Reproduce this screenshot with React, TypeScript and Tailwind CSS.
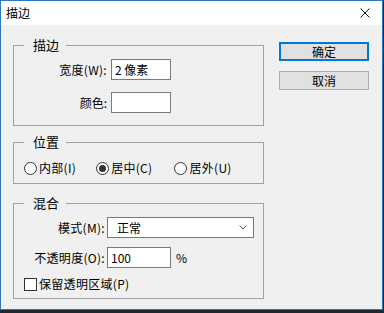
import React from "react";

const font = { fontFamily: '"Noto Sans CJK SC", "Noto Sans", sans-serif' };

function Radio({ label, checked }: { label: string; checked?: boolean }) {
  return (
    <div className="flex items-center gap-[2px]">
      <div className="w-[13px] h-[13px] rounded-full border border-[#333333] bg-white flex items-center justify-center">
        {checked && <div className="w-[7px] h-[7px] rounded-full bg-[#333333]" />}
      </div>
      <span className="text-[12px] leading-[16px] text-black tracking-[0.3px]">{label}</span>
    </div>
  );
}

function Group({ title, children, className }: { title: string; children: React.ReactNode; className?: string }) {
  return (
    <fieldset className={"border border-[#a0a0a0] w-[251px] " + (className ?? "")}>
      <legend className="ml-[10px] pl-[9px] pr-[7px] text-[13px] leading-[16px] text-black">{title}</legend>
      {children}
    </fieldset>
  );
}

export default function App() {
  return (
    <div className="w-[384px] h-[313px] bg-[#1d2a36] overflow-hidden" style={font}>
      <div className="w-[383px] h-[310px] border border-[#2b78c0] bg-[#f0f0f0] flex flex-col">
        <div className="h-[24px] bg-white flex items-center justify-between pl-[5px] pr-[12px] shrink-0">
          <span className="text-[12px] leading-[16px] text-black">描边</span>
          <svg width="10" height="10" viewBox="0 0 10 10">
            <path d="M0.5 0.5 L9.5 9.5 M9.5 0.5 L0.5 9.5" stroke="#111" strokeWidth="1" />
          </svg>
        </div>
        <div className="flex flex-1">
          <div className="pl-[12px] flex flex-col">
            <Group title="描边" className="mt-[12px]">
              <div className="grid grid-cols-[93px_60px] gap-x-[4px] gap-y-[12px] items-center pt-[6px] pb-[12px]">
                <span className="text-right text-[12px] leading-[16px] tracking-[0.3px]">宽度(W):</span>
                <div className="h-[21px] border border-[#7a7a7a] bg-white pl-[3px] text-[12px] leading-[19px]">2 像素</div>
                <span className="text-right text-[12px] leading-[16px]">颜色:</span>
                <div className="h-[21px] border border-[#7a7a7a] bg-white" />
              </div>
            </Group>
            <Group title="位置" className="mt-[8px]">
              <div className="flex items-center gap-[20px] pl-[10px] pt-[10px] pb-[7px]">
                <Radio label="内部(I)" />
                <Radio label="居中(C)" checked />
                <div className="ml-[2px]">
                  <Radio label="居外(U)" />
                </div>
              </div>
            </Group>
            <Group title="混合" className="mt-[11px]">
              <div className="flex flex-col pt-[6px] pb-[6px]">
                <div className="flex items-center">
                  <span className="w-[91px] text-right text-[12px] leading-[16px] tracking-[0.3px]">模式(M):</span>
                  <div className="ml-[2px] w-[147px] h-[21px] border border-[#7a7a7a] bg-white flex items-center justify-between pl-[9px] pr-[6px]">
                    <span className="text-[12px] leading-[16px]">正常</span>
                    <svg width="8" height="5" viewBox="0 0 8 5">
                      <path d="M0.5 0.5 L4 4 L7.5 0.5" stroke="#555" strokeWidth="1" fill="none" />
                    </svg>
                  </div>
                </div>
                <div className="flex items-center mt-[9px]">
                  <span className="w-[91px] text-right text-[12px] leading-[16px] tracking-[0.3px]">不透明度(O):</span>
                  <div className="ml-[2px] w-[64px] h-[21px] border border-[#7a7a7a] bg-white pl-[3px] text-[12px] leading-[19px]">100</div>
                  <span className="ml-[5px] text-[12px] leading-[16px]">%</span>
                </div>
                <div className="flex items-center gap-[2px] pl-[10px] mt-[8px]">
                  <div className="w-[13px] h-[13px] border border-[#333333] bg-white" />
                  <span className="text-[12px] leading-[16px] tracking-[0.3px]">保留透明区域(P)</span>
                </div>
              </div>
            </Group>
          </div>
          <div className="ml-[15px] mt-[17px] flex flex-col gap-[10px]">
            <div className="w-[90px] h-[19px] border-2 border-[#0078d7] bg-[#e1e1e1] flex items-center justify-center text-[12px] leading-[16px]">确定</div>
            <div className="w-[90px] h-[19px] border border-[#adadad] bg-[#e1e1e1] flex items-center justify-center text-[12px] leading-[16px]">取消</div>
          </div>
        </div>
      </div>
    </div>
  );
}
